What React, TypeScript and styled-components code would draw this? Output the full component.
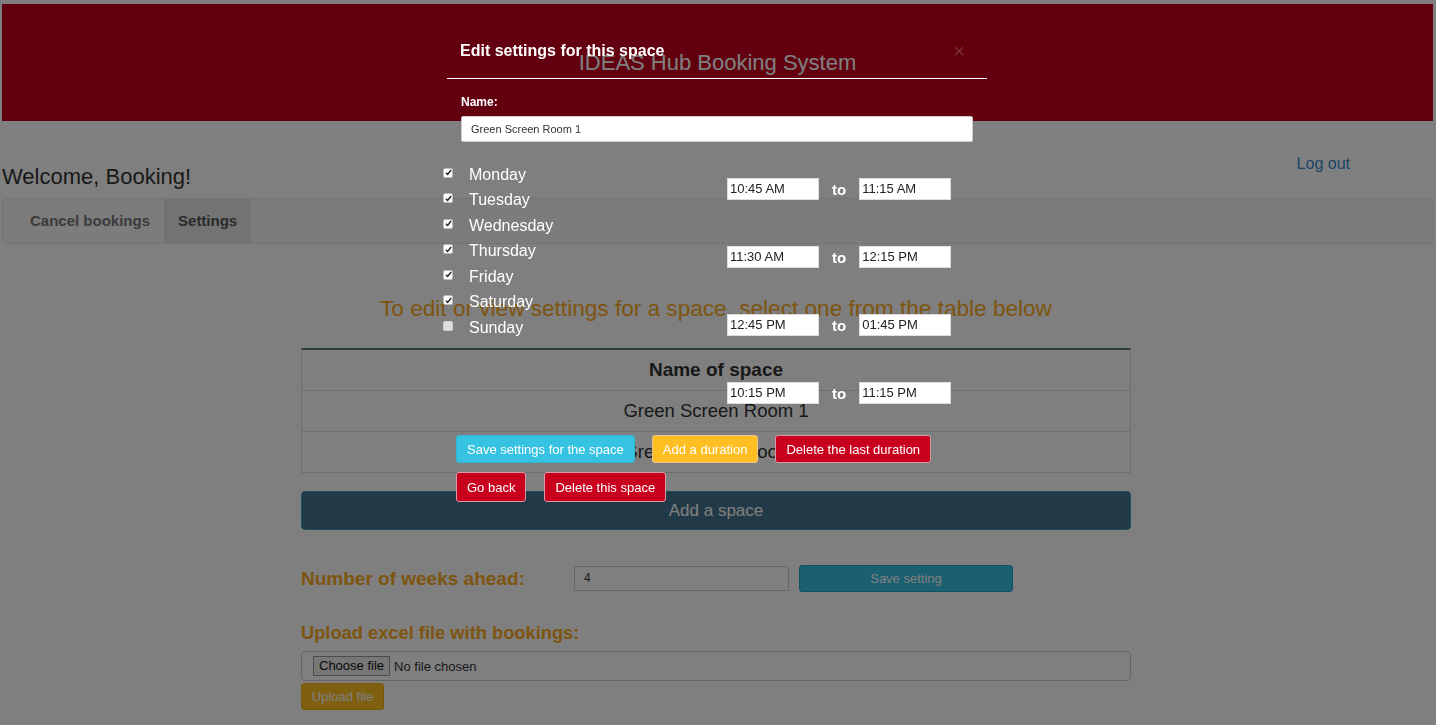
import React from "react";
import styled, { createGlobalStyle } from "styled-components";

const GlobalStyle = createGlobalStyle`
  html, body { margin: 0; padding: 0; background: #ffffff; }
  body { font-family: "Liberation Sans", Arial, sans-serif; color: #333; }
  * { box-sizing: border-box; }
`;

const Page = styled.div`
  position: relative;
  min-height: 725px;
  padding: 4px 4px 0 0;
`;

const Header = styled.header`
  margin: 0 -1px 0 2px;
  height: 117px;
  background: #c4001f;
  display: flex;
  align-items: center;
  justify-content: center;
`;

const SiteTitle = styled.h1`
  margin: 0;
  font-size: 22px;
  font-weight: normal;
  color: #ffffff;
`;

const TopRow = styled.div`
  display: flex;
  justify-content: space-between;
  height: 68px;
  padding: 0 82px 0 2px;
`;

const Welcome = styled.h2`
  margin: 0;
  align-self: flex-end;
  font-size: 22px;
  line-height: 24px;
  font-weight: normal;
  color: #333;
`;

const LogOut = styled.a`
  margin-top: 32px;
  font-size: 16px;
  line-height: 22px;
  color: #3a8ad0;
  text-decoration: none;
  height: 22px;
`;

const Nav = styled.nav`
  margin: 9px -1px 0 2px;
  height: 46px;
  border: 1px solid #e7e7e7;
  border-radius: 4px;
  background: #f8f8f8;
  display: flex;
  padding-left: 13px;
`;

const NavItem = styled.a<{ $active?: boolean }>`
  padding: 0 14px;
  line-height: 44px;
  font-size: 15px;
  font-weight: bold;
  color: ${(p) => (p.$active ? "#555" : "#777")};
  background: ${(p) => (p.$active ? "#e7e7e7" : "transparent")};
`;

const Instruction = styled.h3`
  margin: 52px 0 0;
  text-align: center;
  font-size: 22.6px;
  line-height: 26px;
  font-weight: normal;
  color: #fcaa20;
`;

const Content = styled.div`
  width: 830px;
  margin: 0 auto;
`;

const Table = styled.div`
  margin-top: 26px;
  border: 1px solid #dddddd;
  border-top: 2px solid #587878;
`;

const TableHead = styled.div`
  height: 40px;
  display: flex;
  align-items: center;
  justify-content: center;
  font-size: 19px;
  font-weight: bold;
  color: #333;
`;

const TableRow = styled.div`
  height: 41px;
  border-top: 1px solid #dddddd;
  display: flex;
  align-items: center;
  justify-content: center;
  font-size: 18.5px;
  color: #333;
`;

const AddSpace = styled.button`
  margin-top: 18px;
  width: 100%;
  height: 39px;
  background: #457591;
  border: 1px solid #3aa0b4;
  border-radius: 4px;
  color: #ffffff;
  font-family: inherit;
  font-size: 17px;
`;

const WeeksRow = styled.div`
  margin-top: 35px;
  display: flex;
  align-items: center;
`;

const SectionLabel = styled.div<{ $width?: number; $size?: number }>`
  font-size: ${(p) => p.$size ?? 19}px;
  font-weight: bold;
  color: #fcaa20;
  line-height: 22px;
  ${(p) => (p.$width ? `width: ${p.$width}px;` : "")}
`;

const NumberInput = styled.div`
  width: 215px;
  height: 25px;
  border: 1px solid #cccccc;
  border-radius: 2px;
  background: #ffffff;
  font-size: 12px;
  line-height: 23px;
  padding-left: 9px;
  color: #333;
`;

const InfoButton = styled.button`
  margin-left: 10px;
  width: 214px;
  height: 27px;
  background: #36c0e0;
  border: 1px solid #1fa4c0;
  border-radius: 3px;
  color: #ffffff;
  font-family: inherit;
  font-size: 13px;
`;

const UploadLabel = styled(SectionLabel)`
  margin-top: 30px;
`;

const FileBox = styled.div`
  margin-top: 7px;
  height: 30px;
  border: 1px solid #cccccc;
  border-radius: 4px;
  display: flex;
  align-items: center;
  padding-left: 11px;
  gap: 4px;
  font-size: 13px;
  color: #333;
`;

const ChooseFile = styled.span`
  border: 1px solid #999;
  background: #eeeeee;
  padding: 1px 5px;
  line-height: 16px;
  font-size: 13px;
  color: #111;
`;

const UploadButton = styled.button`
  margin-top: 2px;
  width: 83px;
  height: 27px;
  background: #ffc020;
  border: 1px solid #f0b010;
  border-radius: 3px;
  color: #ffffff;
  font-family: inherit;
  font-size: 13px;
`;

const Overlay = styled.div`
  position: fixed;
  inset: 0;
  background: rgba(0, 0, 0, 0.5);
  z-index: 1;
`;

const Modal = styled.div`
  position: absolute;
  top: 30px;
  left: 447px;
  width: 540px;
  z-index: 2;
  color: #ffffff;
`;

const ModalHeader = styled.div`
  display: flex;
  justify-content: space-between;
  align-items: center;
  padding: 12px 22px 18px 13px;
  border-bottom: 1px solid #ffffff;
`;

const ModalTitle = styled.h4`
  margin: 0;
  font-size: 16px;
  line-height: 18px;
  font-weight: bold;
`;

const Close = styled.span`
  font-size: 20px;
  line-height: 18px;
  color: rgba(200, 150, 160, 0.3);
`;

const Field = styled.div`
  padding: 0 14px;
`;

const FieldLabel = styled.div`
  margin-top: 16px;
  font-size: 12px;
  line-height: 14px;
  font-weight: bold;
`;

const TextInput = styled.div`
  margin-top: 7px;
  height: 26px;
  background: #ffffff;
  border: 1px solid #cccccc;
  border-radius: 2px;
  color: #333;
  font-size: 11px;
  line-height: 24px;
  padding-left: 9px;
`;

const Schedule = styled.div`
  margin: 20px 0 0 -4px;
  display: grid;
  grid-template-columns: 284px auto;
`;

const DayList = styled.div`
  display: flex;
  flex-direction: column;
`;

const DayRow = styled.label`
  height: 25.5px;
  display: flex;
  align-items: center;
  font-size: 16px;
`;

const Box = styled.span<{ $checked: boolean }>`
  width: 10px;
  height: 10px;
  margin: -4px 16px 0 0;
  border-radius: 2px;
  background: ${(p) => (p.$checked ? "#ffffff" : "#dddddd")};
  border: 1px solid ${(p) => (p.$checked ? "#bbbbbb" : "#cfcfcf")};
  display: flex;
  align-items: center;
  justify-content: center;
`;

const Times = styled.div`
  padding-top: 16px;
  display: flex;
  flex-direction: column;
  gap: 46px;
`;

const TimeRow = styled.div`
  display: flex;
  align-items: center;
  height: 22px;
`;

const TimeInput = styled.div`
  width: 92px;
  height: 22px;
  background: #ffffff;
  border: 1px solid #dddddd;
  color: #222;
  font-size: 13px;
  line-height: 20px;
  padding-left: 2px;
`;

const To = styled.span`
  margin: 0 13px;
  font-size: 15px;
  font-weight: bold;
`;

const ButtonRow = styled.div<{ $top: number; $gap: number; $height: number }>`
  display: flex;
  margin: ${(p) => p.$top}px 0 0 9px;
  gap: ${(p) => p.$gap}px;
  & > button { height: ${(p) => p.$height}px; }
`;

const ActionButton = styled.button<{ $tone: "info" | "warn" | "danger" }>`
  padding: 0 10px;
  border-radius: 3px;
  font-family: inherit;
  font-size: 13px;
  color: #ffffff;
  background: ${(p) =>
    p.$tone === "info" ? "#35c3e1" : p.$tone === "warn" ? "#ffbe22" : "#c8001e"};
  border: 1px solid
    ${(p) =>
      p.$tone === "info" ? "#2fb4d2" : p.$tone === "warn" ? "#e8c890" : "#d89aa4"};
`;

const days: { name: string; checked: boolean }[] = [
  { name: "Monday", checked: true },
  { name: "Tuesday", checked: true },
  { name: "Wednesday", checked: true },
  { name: "Thursday", checked: true },
  { name: "Friday", checked: true },
  { name: "Saturday", checked: true },
  { name: "Sunday", checked: false },
];

const durations: [string, string][] = [
  ["10:45 AM", "11:15 AM"],
  ["11:30 AM", "12:15 PM"],
  ["12:45 PM", "01:45 PM"],
  ["10:15 PM", "11:15 PM"],
];

function Check({ checked }: { checked: boolean }) {
  return (
    <Box $checked={checked}>
      {checked && (
        <svg width="7" height="7" viewBox="0 0 8 8">
          <path d="M1 4.2 L3 6.3 L7 1.2" fill="none" stroke="#222" strokeWidth="1.6" />
        </svg>
      )}
    </Box>
  );
}

export default function App() {
  return (
    <>
      <GlobalStyle />
      <Page>
        <Header>
          <SiteTitle>IDEAS Hub Booking System</SiteTitle>
        </Header>
        <TopRow>
          <Welcome>Welcome, Booking!</Welcome>
          <LogOut>Log out</LogOut>
        </TopRow>
        <Nav>
          <NavItem>Cancel bookings</NavItem>
          <NavItem $active>Settings</NavItem>
        </Nav>
        <Instruction>To edit or view settings for a space, select one from the table below</Instruction>
        <Content>
          <Table>
            <TableHead>Name of space</TableHead>
            <TableRow>Green Screen Room 1</TableRow>
            <TableRow>Green Screen Room 2</TableRow>
          </Table>
          <AddSpace>Add a space</AddSpace>
          <WeeksRow>
            <SectionLabel $width={273}>Number of weeks ahead:</SectionLabel>
            <NumberInput>4</NumberInput>
            <InfoButton>Save setting</InfoButton>
          </WeeksRow>
          <UploadLabel $size={18.3}>Upload excel file with bookings:</UploadLabel>
          <FileBox>
            <ChooseFile>Choose file</ChooseFile>
            <span>No file chosen</span>
          </FileBox>
          <UploadButton>Upload file</UploadButton>
        </Content>

        <Overlay />
        <Modal>
          <ModalHeader>
            <ModalTitle>Edit settings for this space</ModalTitle>
            <Close>×</Close>
          </ModalHeader>
          <Field>
            <FieldLabel>Name:</FieldLabel>
            <TextInput>Green Screen Room 1</TextInput>
          </Field>
          <Schedule>
            <DayList>
              {days.map((d) => (
                <DayRow key={d.name}>
                  <Check checked={d.checked} />
                  {d.name}
                </DayRow>
              ))}
            </DayList>
            <Times>
              {durations.map(([a, b]) => (
                <TimeRow key={a}>
                  <TimeInput>{a}</TimeInput>
                  <To>to</To>
                  <TimeInput>{b}</TimeInput>
                </TimeRow>
              ))}
            </Times>
          </Schedule>
          <ButtonRow $top={31} $gap={17} $height={28}>
            <ActionButton $tone="info">Save settings for the space</ActionButton>
            <ActionButton $tone="warn">Add a duration</ActionButton>
            <ActionButton $tone="danger">Delete the last duration</ActionButton>
          </ButtonRow>
          <ButtonRow $top={9} $gap={18} $height={30}>
            <ActionButton $tone="danger">Go back</ActionButton>
            <ActionButton $tone="danger">Delete this space</ActionButton>
          </ButtonRow>
        </Modal>
      </Page>
    </>
  );
}
